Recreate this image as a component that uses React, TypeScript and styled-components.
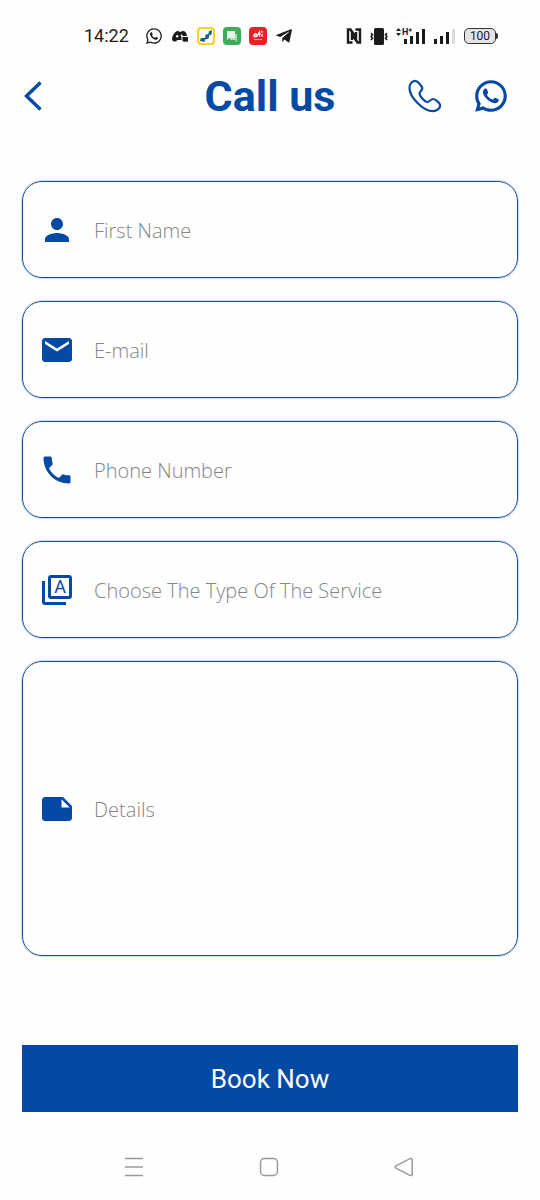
import React from "react";
import styled, { createGlobalStyle } from "styled-components";
import { FaWhatsapp, FaTelegramPlane } from "react-icons/fa";
import { MdEmail, MdNote, MdPerson, MdPhone } from "react-icons/md";
import { RiWhatsappLine } from "react-icons/ri";

const blue = "#0449a4";

const GlobalStyle = createGlobalStyle`
  *, *::before, *::after { box-sizing: border-box; }
  body { margin: 0; background: #fefefe; font-family: Roboto, "Liberation Sans", sans-serif; }
  button, input, select, textarea { font: inherit; color: inherit; }
  svg { display: block; flex: none; }
`;

const Screen = styled.div`
  display: flex;
  flex-direction: column;
  min-height: 100vh;
`;

const StatusBar = styled.div`
  display: flex;
  align-items: center;
  justify-content: space-between;
  height: 72px;
  padding: 0 44px 0 84px;
  color: #1b1b1b;
`;

const StatusGroup = styled.div`
  display: flex;
  align-items: center;
  gap: 8px;
`;

const Clock = styled.time`
  margin-right: 8px;
  font-size: 18px;
  line-height: 24px;
`;

const Battery = styled.span`
  position: relative;
  width: 32px;
  height: 16px;
  border: 1px solid #333;
  border-radius: 5px;
  background: #e4e4e4;
  font-size: 12px;
  line-height: 14px;
  text-align: center;

  &::after {
    content: "";
    position: absolute;
    top: 4px;
    right: -3px;
    width: 2px;
    height: 6px;
    border-radius: 0 2px 2px 0;
    background: #333;
  }
`;

const Header = styled.header`
  display: grid;
  grid-template-columns: 1fr auto 1fr;
  align-items: center;
  height: 48px;
  padding: 0 24px;
  color: ${blue};
`;

const Title = styled.h1`
  margin: 0;
  font-size: 43px;
  font-weight: 700;
  line-height: 48px;
`;

const IconButton = styled.button<{ $width: number }>`
  display: flex;
  align-items: center;
  justify-content: center;
  width: ${(p) => p.$width}px;
  height: 48px;
  padding: 0;
  border: 0;
  background: none;
  cursor: pointer;
`;

const Actions = styled.div`
  display: flex;
  justify-content: flex-end;
  gap: 16px;
`;

const Form = styled.form`
  display: flex;
  flex-direction: column;
  gap: 23px;
  padding: 61px 22px 0;
`;

const Field = styled.div<{ $tall?: boolean }>`
  display: flex;
  align-items: center;
  gap: 19px;
  height: ${(p) => (p.$tall ? 295 : 97)}px;
  padding: 0 16px;
  border: 1px solid #164f9c;
  border-radius: 20px;
  box-shadow: 0 0 0 1px #cfdef0;
  font-family: "Open Sans", "Noto Sans", sans-serif;
  font-size: 20px;
  color: #858585;

  input, select, textarea {
    flex: 1;
    min-width: 0;
    height: 32px;
    margin: 0;
    padding: 2px 0 0;
    border: 0;
    outline: 0;
    resize: none;
    appearance: none;
    background: none;
    font-weight: 300;
    line-height: 30px;
  }

  ::placeholder { color: #858585; opacity: 1; }
`;

const FieldLabel = styled.label`
  color: ${blue};
`;

const SubmitButton = styled.button`
  height: 67px;
  margin-top: 66px;
  border: 0;
  background: ${blue};
  && {
    color: #fff;
    font-size: 26px;
  }
  cursor: pointer;
`;

const NavBar = styled.nav`
  display: flex;
  justify-content: space-around;
  padding: 43px 68px 21px 66px;
  color: #999;
`;

const NavButton = styled(IconButton)`
  height: 24px;
`;

function DiscordIcon() {
  return (
    <svg width="18" height="18" viewBox="0 0 18 18" fill="currentColor">
      <path d="M5 4.500 7.300 3.800 8 4.800h2.500l.8-1L14 4.600c1.200 1.600 1.800 2.800 2 4.400h-5.500v4H6.300l-1.300 1.600C3 14.500 1.800 14 1 13c0-3.500.9-6 4-8.500Z" />
      <circle cx="6.200" cy="9.200" r="1.200" fill="#fefefe" />
      <circle cx="10.600" cy="8.500" r="1" fill="#fefefe" />
      <path d="M11.500 10H17v4.400h-2l-1.200 1.200v-1.200h-2.300Z" />
    </svg>
  );
}

function TransferIcon() {
  return (
    <svg width="18" height="18" viewBox="0 0 18 18">
      <rect width="18" height="18" rx="4" fill="#f8d323" />
      <rect x="2" y="2" width="14" height="14" rx="3" fill="#fff" />
      <path d="m3 14 .8-3H8l.6-3.500 3-.5V4.500L15 3l-.5 4.500-2.200.8-.8 3.400-3.300.8L7.500 15Z" fill="#17608f" />
    </svg>
  );
}

function ChatIcon() {
  return (
    <svg width="18" height="18" viewBox="0 0 18 18">
      <rect width="18" height="18" rx="4" fill="#3bad5b" />
      <path d="M7 7h7v8l-2-2H7Z" fill="#a8ddb6" />
      <path d="M4 4h8v7H6l-2 2Z" fill="#e5f6e9" />
    </svg>
  );
}

function RedAppIcon() {
  return (
    <svg width="18" height="18" viewBox="0 0 18 18" fill="none" stroke="#fff">
      <rect width="18" height="18" rx="4" fill="#e8202a" stroke="none" />
      <path d="M5 8.200h3c0-2.500-3-2-3.200 0s1.700 2 3.200 1L10.500 5v4.500M9.500 7H12M13 7v3M12 4.800h2" strokeWidth="1.200" />
      <path d="M5 12.500h8" stroke="#f7a0a4" />
    </svg>
  );
}

function NfcIcon() {
  return (
    <svg width="16" height="16" viewBox="0 0 16 16" fill="none" stroke="currentColor" strokeWidth="2.400">
      <path d="M6.500 14.500H2v-13h2.500L10 9.500V4" />
      <path d="M9.500 1.500H14v13h-2.500L6 6.500V12" />
    </svg>
  );
}

function VibrateIcon() {
  return (
    <svg width="18" height="17" viewBox="0 0 18 17">
      <rect x="4" y="0" width="10" height="17" rx="1.500" fill="#1b1b1b" />
      <path d="m1 5 1.500 1.800L1 8.500l1.500 1.700L1 12M17 5l-1.500 1.800L17 8.500l-1.500 1.700L17 12" fill="none" stroke="#1b1b1b" strokeWidth="1.600" />
    </svg>
  );
}

function DataSignalIcon() {
  return (
    <svg width="30" height="18" viewBox="0 0 30 18" fill="currentColor">
      <path d="m0 4 2.500-3L5 4ZM0 6h5L2.500 9Z" />
      <text x="6" y="8" fontSize="9" fontWeight="700">H</text>
      <path d="M12.500 2.500H16v1h-3.500ZM13.700 1.200h1v3.600h-1ZM8 12h3v5H8ZM14 9h3v8h-3ZM20 5h3v12h-3ZM26 2h3v15h-3Z" />
    </svg>
  );
}

function SignalIcon() {
  return (
    <svg width="22" height="18" viewBox="0 0 22 18" fill="currentColor">
      <path d="M0 12h3v5H0ZM6 9h3v8H6ZM12 5h3v12h-3Z" />
      <path d="M18 2h3v15h-3Z" fill="#dcdcdc" />
    </svg>
  );
}

function BackIcon() {
  return (
    <svg width="18" height="30" viewBox="0 0 18 30" fill="none" stroke="currentColor" strokeWidth="3.400">
      <path d="M16.500 1.500 2.500 15l14 13.500" />
    </svg>
  );
}

function HandsetIcon() {
  return (
    <svg width="50" height="48" viewBox="0 0 50 48" fill="none" stroke="currentColor" strokeWidth="2.200">
      <path d="M9.500 16C9.500 12 12 8.800 15 8.800C18 8.800 20 12 22 15.200C23.500 18 19 19.500 19.500 21.800C20 24.500 24.500 29.500 27 30C29.500 30.300 30.500 27 33 27C35.500 27 40.200 31 40.200 33.500C40.200 36.500 36.500 39.200 33 39.200C23 39.200 9.500 25 9.500 16Z" />
    </svg>
  );
}

function ServiceIcon() {
  return (
    <svg width="36" height="36" viewBox="0 0 24 24" fill="none" stroke="currentColor" strokeWidth="2">
      <rect x="7" y="3" width="14" height="14" rx="1" />
      <path d="M3 6v14a1 1 0 0 0 1 1h14" />
      <text x="14" y="14.200" fill="currentColor" stroke="none" fontFamily="Roboto, sans-serif" fontSize="12" fontWeight="400" textAnchor="middle">A</text>
    </svg>
  );
}

export default function App() {
  return (
    <Screen>
      <GlobalStyle />
      <StatusBar>
        <StatusGroup>
          <Clock>14:22</Clock>
          <FaWhatsapp size={18} />
          <DiscordIcon />
          <TransferIcon />
          <ChatIcon />
          <RedAppIcon />
          <FaTelegramPlane size={18} />
        </StatusGroup>
        <StatusGroup>
          <NfcIcon />
          <VibrateIcon />
          <DataSignalIcon />
          <SignalIcon />
          <Battery>100</Battery>
        </StatusGroup>
      </StatusBar>

      <Header>
        <IconButton type="button" $width={18} aria-label="Back"><BackIcon /></IconButton>
        <Title>Call us</Title>
        <Actions>
          <IconButton type="button" $width={50} aria-label="Phone"><HandsetIcon /></IconButton>
          <IconButton type="button" $width={50} aria-label="WhatsApp"><RiWhatsappLine size={38} /></IconButton>
        </Actions>
      </Header>

      <Form onSubmit={(e) => e.preventDefault()}>
        <Field>
          <FieldLabel htmlFor="name" aria-label="First Name"><MdPerson size={36} /></FieldLabel>
          <input id="name" type="text" placeholder="First Name" />
        </Field>
        <Field>
          <FieldLabel htmlFor="email" aria-label="E-mail"><MdEmail size={36} /></FieldLabel>
          <input id="email" type="email" placeholder="E-mail" />
        </Field>
        <Field>
          <FieldLabel htmlFor="phone" aria-label="Phone Number"><MdPhone size={36} /></FieldLabel>
          <input id="phone" type="tel" placeholder="Phone Number" />
        </Field>
        <Field>
          <FieldLabel htmlFor="service" aria-label="Type of service"><ServiceIcon /></FieldLabel>
          <select id="service" defaultValue="">
            <option value="">Choose The Type Of The Service</option>
          </select>
        </Field>
        <Field $tall>
          <FieldLabel htmlFor="details" aria-label="Details"><MdNote size={36} /></FieldLabel>
          <textarea id="details" rows={1} placeholder="Details" />
        </Field>
        <SubmitButton type="submit">Book Now</SubmitButton>
      </Form>

      <NavBar>
        <NavButton type="button" $width={24} aria-label="Recent apps">
          <svg width="20" height="20" viewBox="0 0 20 20" stroke="currentColor" strokeWidth="1.500">
            <path d="M1 1.500h18M1 10h18M1 18.500h18" />
          </svg>
        </NavButton>
        <NavButton type="button" $width={24} aria-label="Home">
          <svg width="20" height="20" viewBox="0 0 20 20" fill="none" stroke="currentColor" strokeWidth="1.500">
            <rect x="1.500" y="1.500" width="17" height="17" rx="4" />
          </svg>
        </NavButton>
        <NavButton type="button" $width={24} aria-label="Back">
          <svg width="20" height="20" viewBox="0 0 20 20" fill="none" stroke="currentColor" strokeWidth="1.500">
            <path d="M2 8.800 16 1.600q2.200-.8 2.200 1.400v14q0 2.200-2.200 1.400L2 11.200q-1.800-1.200 0-2.400Z" />
          </svg>
        </NavButton>
      </NavBar>
    </Screen>
  );
}
